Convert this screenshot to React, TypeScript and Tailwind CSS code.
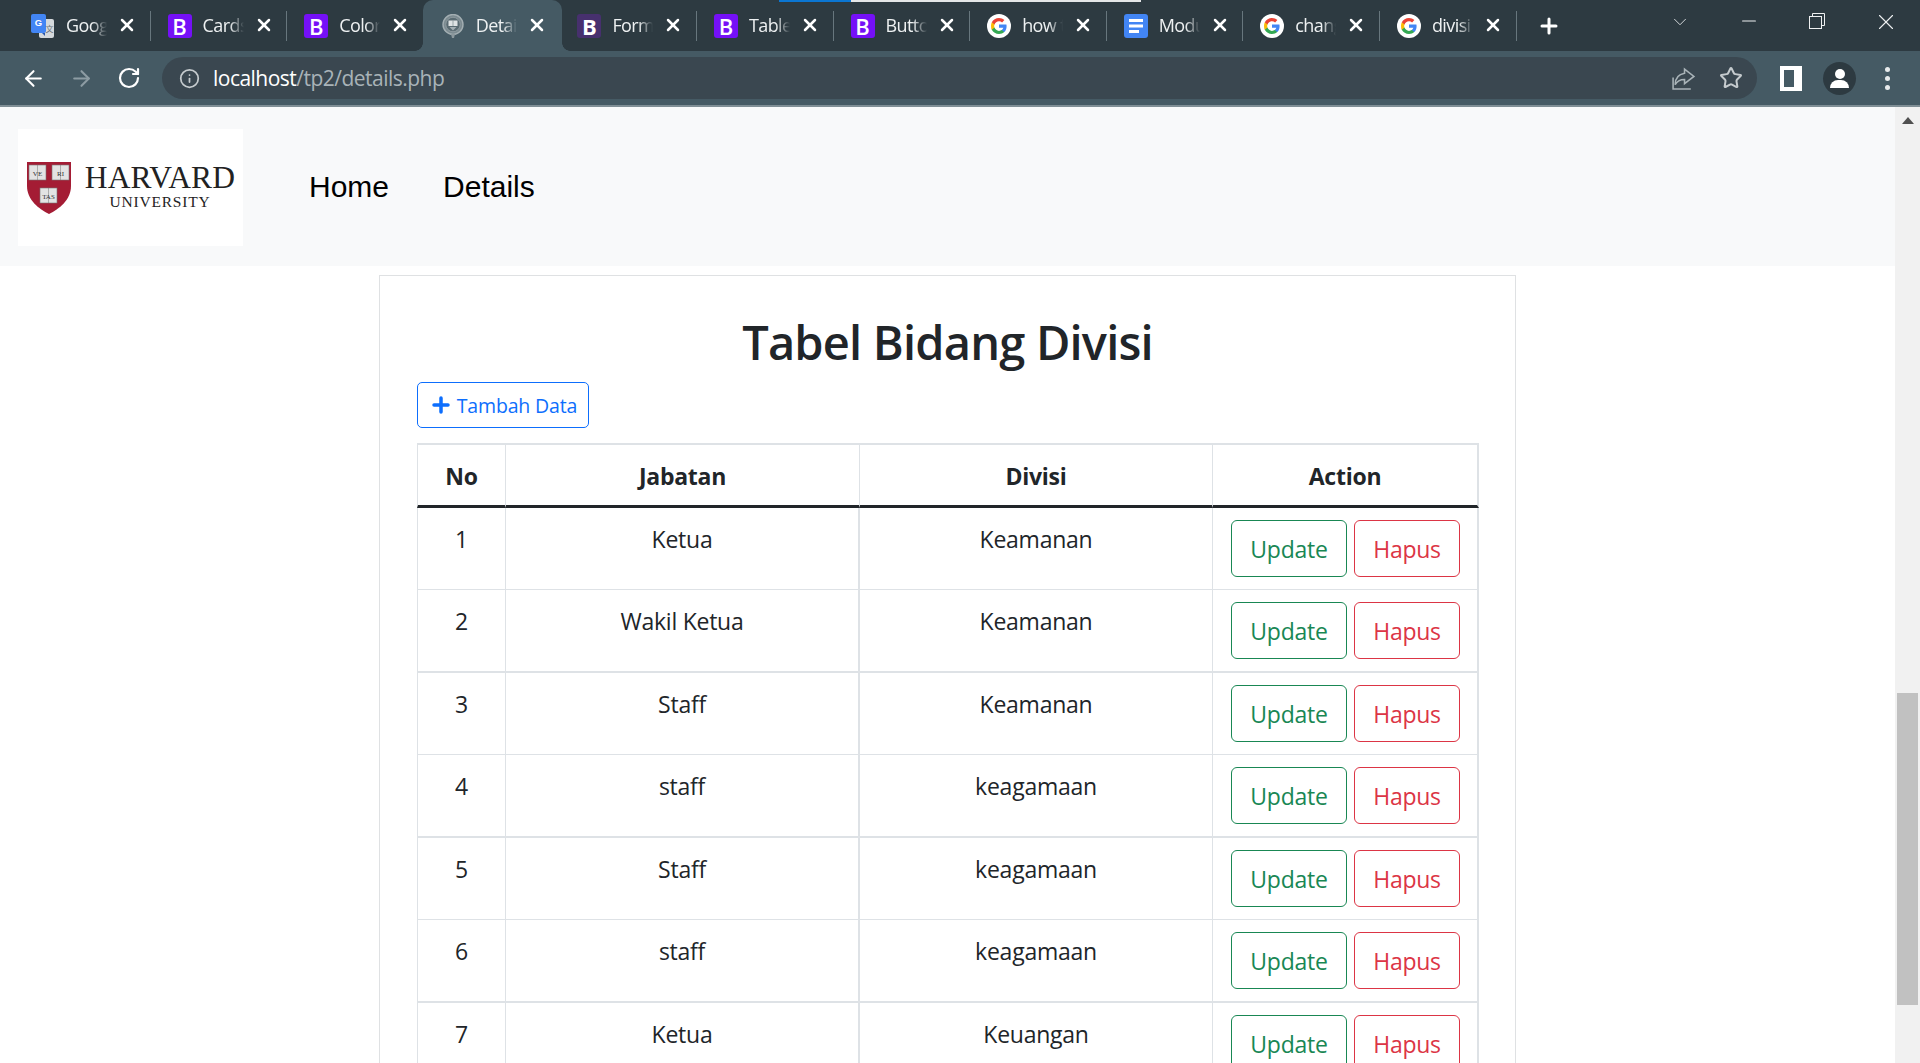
import React from "react";
import { ArrowLeft, ArrowRight, RotateCw, Info, Star, X, Plus, ChevronDown, Minus } from "lucide-react";

const GoogleG = () => (
  <svg viewBox="0 0 24 24" className="w-[24px] h-[24px]">
    <circle cx="12" cy="12" r="12" fill="#fff" />
    <path d="M19.6 12.2c0-.6-.1-1.1-.2-1.6H12v3.1h4.3c-.2 1-.7 1.8-1.6 2.4v2h2.6c1.5-1.4 2.3-3.4 2.3-5.9z" fill="#4285F4" />
    <path d="M12 20c2.2 0 4-.7 5.3-1.9l-2.6-2c-.7.5-1.6.8-2.7.8-2.1 0-3.9-1.4-4.5-3.3H4.8v2.1C6.1 18.2 8.8 20 12 20z" fill="#34A853" />
    <path d="M7.5 13.6c-.2-.5-.3-1-.3-1.6s.1-1.1.3-1.6V8.3H4.8C4.3 9.4 4 10.7 4 12s.3 2.6.8 3.7l2.7-2.1z" fill="#FBBC05" />
    <path d="M12 7.2c1.2 0 2.2.4 3.1 1.2l2.3-2.3C16 4.8 14.2 4 12 4 8.8 4 6.1 5.8 4.8 8.3l2.7 2.1c.6-1.9 2.4-3.2 4.5-3.2z" fill="#EA4335" />
  </svg>
);

const BootIcon = ({ dark }: { dark?: boolean }) => (
  <div className={`w-[24px] h-[24px] rounded-[3px] flex items-center justify-center ${dark ? "bg-[#47306e]" : "bg-[#7510f7]"}`}>
    <span className={`text-white text-[22px] leading-none font-['Open_Sans',sans-serif] ${dark ? "font-bold" : "font-semibold"}`}>B</span>
  </div>
);

const DocsIcon = () => (
  <svg viewBox="0 0 24 24" className="w-[24px] h-[24px]">
    <rect width="24" height="24" rx="3" fill="#4285F4" />
    <rect x="5" y="5" width="14" height="3" fill="#fff" />
    <rect x="5" y="10.5" width="14" height="3" fill="#fff" />
    <rect x="5" y="16" width="10" height="3" fill="#fff" />
  </svg>
);

const TranslateIcon = () => (
  <svg viewBox="0 0 24 24" className="w-[24px] h-[24px]">
    <rect x="8" y="5" width="15" height="19" rx="2" fill="#d5d9dc" />
    <rect x="0" y="0" width="15" height="19" rx="2" fill="#4285F4" />
    <path d="M14 19l-3 0 3 3z" fill="#2a56a8" />
    <text x="7.5" y="12" textAnchor="middle" fontSize="9.5" fontWeight="700" fill="#fff" fontFamily="Liberation Sans, sans-serif">G</text>
    <text x="18.5" y="18" textAnchor="middle" fontSize="8" fill="#6b7278" fontFamily="Noto Sans CJK SC, sans-serif">文</text>
  </svg>
);

const CrestIcon = () => (
  <svg viewBox="0 0 24 24" className="w-[24px] h-[24px]">
    <circle cx="12" cy="10.5" r="10" fill="#7b8a90" stroke="#a3aeb2" strokeWidth="1.4" />
    <circle cx="12" cy="10.5" r="7.2" fill="#5a6b72" stroke="#94a0a5" strokeWidth="0.8" />
    <rect x="7.5" y="6.5" width="9" height="5.5" fill="#dfe3e4" />
    <line x1="12" y1="6.5" x2="12" y2="12" stroke="#7b8a90" strokeWidth="0.7" />
    <path d="M8.5 13h7l-3.5 3.5z" fill="#a3aeb2" />
    <path d="M10 20h4l-1 4h-2z" fill="#8c989d" />
  </svg>
);

const tabs = [
  { title: "Google Translate", icon: <TranslateIcon /> },
  { title: "Cards", icon: <BootIcon /> },
  { title: "Colors", icon: <BootIcon /> },
  { title: "Details", icon: <CrestIcon />, active: true },
  { title: "Forms", icon: <BootIcon dark /> },
  { title: "Tables", icon: <BootIcon /> },
  { title: "Buttons", icon: <BootIcon /> },
  { title: "how to", icon: <GoogleG /> },
  { title: "Modul", icon: <DocsIcon /> },
  { title: "change", icon: <GoogleG /> },
  { title: "divisi", icon: <GoogleG /> },
];

const Tab = ({ t, i }: { t: (typeof tabs)[number]; i: number }) => {
  const nextActive = tabs[i + 1]?.active;
  return (
    <div className="relative w-[136.6px] h-full shrink-0 flex items-center pl-[17px]">
      {t.active && (
        <>
          <div className="absolute left-[-1px] right-[-1.4px] top-0 bottom-0 bg-[#455a64] rounded-t-[10px]" />
          <div className="absolute left-[-9px] bottom-0 w-[8px] h-[8px] bg-[radial-gradient(circle_at_0_0,transparent_7.5px,#455a64_8px)]" />
          <div className="absolute right-[-9.4px] bottom-0 w-[8px] h-[8px] bg-[radial-gradient(circle_at_100%_0,transparent_7.5px,#455a64_8px)]" />
        </>
      )}
      <div className="relative w-[24px] h-[24px] shrink-0">{t.icon}</div>
      <span className="relative -mt-[1px] ml-[11px] w-[41px] overflow-hidden whitespace-nowrap text-[18px] leading-[24px] text-[#eef1f2] tracking-[-0.6px] font-['Open_Sans',sans-serif] [mask-image:linear-gradient(to_right,#000_65%,transparent_100%)]">
        {t.title}
      </span>
      <X className="absolute left-[103px] top-[15px] w-[20px] h-[20px] text-white" strokeWidth={3} />
      {!t.active && !nextActive && <div className="absolute right-0 top-[11px] h-[30px] w-[1px] bg-[#67767d]" />}
    </div>
  );
};

const Shield = () => (
  <svg viewBox="0 0 44 52" className="w-[44px] h-[52px]">
    <path d="M0 0h44v24c0 14-12 23-22 28C12 47 0 38 0 24z" fill="#a41c34" />
    {[
      [2, 3, "VE"],
      [25, 3, "RI"],
      [13, 26, "TAS"],
    ].map(([x, y, s]) => (
      <g key={String(s)}>
        <rect x={Number(x)} y={Number(y)} width="17" height="15" fill="#e3e3e3" stroke="#777" strokeWidth="0.6" />
        <line x1={Number(x) + 8.5} y1={Number(y)} x2={Number(x) + 8.5} y2={Number(y) + 15} stroke="#777" strokeWidth="0.5" />
        <text x={Number(x) + 8.5} y={Number(y) + 10.5} textAnchor="middle" fontSize="7" fill="#333" fontFamily="Liberation Serif, serif">{s}</text>
      </g>
    ))}
  </svg>
);

const rows: { no: string; jab: string; div: string; h: string; b: string }[] = [
  { no: "1", jab: "Ketua", div: "Keamanan", h: "h-[82px]", b: "border-b" },
  { no: "2", jab: "Wakil Ketua", div: "Keamanan", h: "h-[83px]", b: "border-b-2" },
  { no: "3", jab: "Staff", div: "Keamanan", h: "h-[82px]", b: "border-b" },
  { no: "4", jab: "staff", div: "keagamaan", h: "h-[83px]", b: "border-b-2" },
  { no: "5", jab: "Staff", div: "keagamaan", h: "h-[82px]", b: "border-b" },
  { no: "6", jab: "staff", div: "keagamaan", h: "h-[83px]", b: "border-b-2" },
  { no: "7", jab: "Ketua", div: "Keuangan", h: "h-[82px]", b: "border-b" },
];

const Td = ({ children, cls }: { children: React.ReactNode; cls: string }) => (
  <td className={`align-top pt-[13px] text-center border-[#dee2e6] ${cls}`}>{children}</td>
);

export default function App() {
  return (
    <div className="w-[1920px] h-[1063px] overflow-hidden flex flex-col bg-white">
      {/* tab strip */}
      <div className="h-[51px] shrink-0 bg-[#2d3a41] flex items-stretch relative">
        <div className="absolute left-[779px] top-0 h-[2px] w-[72px] bg-[#0b76d2]" />
        <div className="absolute left-[851px] top-0 h-[2px] w-[290px] bg-[#e4e6e7]" />
        <div className="w-[14px] shrink-0" />
        {tabs.map((t, i) => (
          <Tab key={i} t={t} i={i} />
        ))}
        <div className="w-[64px] flex items-center justify-center shrink-0">
          <Plus className="w-[24px] h-[24px] text-white" strokeWidth={3} />
        </div>
        <div className="ml-auto flex h-full">
          <div className="w-[68.5px] flex justify-center pt-[11px]"><ChevronDown className="w-[24px] h-[22px] text-[#dfe3e5]" strokeWidth={1} /></div>
          <div className="w-[68.5px] flex justify-center pt-[10px]"><Minus className="w-[22px] h-[22px] text-[#eef0f1]" strokeWidth={1.2} /></div>
          <div className="w-[68.5px] flex justify-center pt-[13px]">
            <svg viewBox="0 0 16 16" className="w-[16px] h-[16px]" fill="none" stroke="#eef0f1" strokeWidth="1">
              <rect x="0.5" y="3.5" width="12" height="12" />
              <path d="M3.5 3.5v-3h12v12h-3" />
            </svg>
          </div>
          <div className="w-[68.5px] flex justify-center pt-[9px]"><X className="w-[26px] h-[26px] text-[#eef0f1]" strokeWidth={1} /></div>
        </div>
      </div>

      {/* toolbar */}
      <div className="h-[56px] shrink-0 bg-[#455a64] border-b-2 border-[#7f8e95] flex items-center pb-[2px] pt-[2px]">
        <div className="w-[9px]" />
        <div className="w-[48px] flex justify-center"><ArrowLeft className="w-[25px] h-[25px] text-white" strokeWidth={2} /></div>
        <div className="w-[48px] flex justify-center"><ArrowRight className="w-[25px] h-[25px] text-[#8d9ca3]" strokeWidth={2} /></div>
        <div className="w-[48px] flex justify-center"><RotateCw className="w-[24px] h-[24px] text-white" strokeWidth={2.2} /></div>
        <div className="ml-[9px] w-[1595px] h-[42px] bg-[#3a4750] rounded-full flex items-center">
          <Info className="ml-[17px] w-[21px] h-[21px] text-[#c5cbce]" strokeWidth={2} />
          <span className="ml-[13px] text-[21px] leading-[30px] tracking-[-0.52px] font-['Open_Sans',sans-serif] text-white">
            localhost<span className="text-[#a9b3b8]">/tp2/details.php</span>
          </span>
          <div className="ml-auto flex items-center">
            <svg viewBox="0 0 24 24" className="w-[25px] h-[25px]" fill="none" stroke="#a9b3b8" strokeWidth="1.5">
              <path d="M2 11v11h17" />
              <path d="M13 3l9 7-9 7v-4c-4 0-7 1-9 5 0-6 3-10 9-11z" />
            </svg>
            <Star className="ml-[23px] mr-[14px] w-[24px] h-[24px] text-[#c5cbce]" strokeWidth={2} />
          </div>
        </div>
        <div className="ml-[23px] w-[22px] h-[25px] bg-white flex justify-start p-[4px]">
          <div className="w-[10px] h-full bg-[#455a64]" />
        </div>
        <div className="ml-[21px] w-[33px] h-[33px] rounded-full bg-[#2d3a41] relative overflow-hidden">
          <div className="absolute left-[11.5px] top-[7px] w-[10px] h-[10px] rounded-full bg-white" />
          <div className="absolute left-[7px] top-[18px] w-[19px] h-[8px] rounded-t-[8px] bg-white" />
        </div>
        <div className="ml-[29px] flex flex-col gap-[4px]">
          <div className="w-[5px] h-[5px] rounded-full bg-[#e8ebec]" />
          <div className="w-[5px] h-[5px] rounded-full bg-[#e8ebec]" />
          <div className="w-[5px] h-[5px] rounded-full bg-[#e8ebec]" />
        </div>
      </div>

      {/* viewport */}
      <div className="flex-1 min-h-0 flex">
        <div className="w-[1895px] shrink-0 overflow-hidden text-[#212529] font-['Open_Sans',sans-serif]">
          {/* navbar */}
          <nav className="h-[159px] bg-[#f8f9fa] flex pl-[18px] pt-[22px]">
            <div className="w-[225px] h-[117px] bg-white flex items-center pl-[9px]">
              <Shield />
              <div className="ml-[14px] w-[150px] -mt-[2px] flex flex-col items-center text-[#222] font-['Liberation_Serif',serif]">
                <span className="text-[31.5px] leading-[30px] tracking-[0.2px] whitespace-nowrap">HARVARD</span>
                <span className="text-[15.5px] leading-[17px] tracking-[0.8px]">UNIVERSITY</span>
              </div>
            </div>
            <a className="ml-[66px] mt-[40px] h-[36px] text-[30px] leading-[36px] text-black font-['Liberation_Sans',sans-serif]">Home</a>
            <a className="ml-[54px] mt-[40px] h-[36px] text-[30px] leading-[36px] text-black font-['Liberation_Sans',sans-serif]">Details</a>
          </nav>

          {/* card */}
          <div className="ml-[379px] mt-[9px] w-[1137px] border border-[#dfe1e3] pt-[37px] px-[37px]">
            <h2 className="text-center text-[47px] leading-[58px] font-semibold tracking-[-0.8px] text-[#212529]">Tabel Bidang Divisi</h2>
            <button className="mt-[11px] w-[172px] h-[46px] border border-[#0d6efd] rounded-[5px] text-[#0d6efd] text-[19.5px] leading-[30px] tracking-[-0.15px] flex items-center justify-center gap-[4px]">
              <Plus className="w-[24px] h-[24px]" strokeWidth={3.5} />
              <span className="pt-[1px]">Tambah Data</span>
            </button>
            <table className="mt-[15px] w-[1062px] table-fixed border-separate border-spacing-0 text-[23px] leading-[36px] tracking-[-0.25px]">
              <colgroup>
                <col className="w-[89px]" />
                <col className="w-[354px]" />
                <col className="w-[353px]" />
                <col className="w-[266px]" />
              </colgroup>
              <thead>
                <tr className="h-[65px]">
                  <th className="pt-[2px] border-t-2 border-l border-r border-[#dee2e6] border-b-[3px] border-b-[#212529] font-bold">No</th>
                  <th className="pt-[2px] border-t-2 border-r border-[#dee2e6] border-b-[3px] border-b-[#212529] font-bold">Jabatan</th>
                  <th className="pt-[2px] border-t-2 border-r border-[#dee2e6] border-b-[3px] border-b-[#212529] font-bold">Divisi</th>
                  <th className="pt-[2px] border-t-2 border-r-2 border-[#dee2e6] border-b-[3px] border-b-[#212529] font-bold">Action</th>
                </tr>
              </thead>
              <tbody>
                {rows.map((r) => (
                  <tr key={r.no} className={r.h}>
                    <Td cls={`border-l border-r ${r.b}`}>{r.no}</Td>
                    <Td cls={`border-r-2 ${r.b}`}>{r.jab}</Td>
                    <Td cls={`border-r ${r.b}`}>{r.div}</Td>
                    <td className={`align-top pt-[12px] pl-[18px] border-r-2 border-[#dee2e6] ${r.b}`}>
                      <div className="flex gap-[7px]">
                        <button className="w-[116px] h-[57px] border border-[#198754] rounded-[6px] text-[#198754] text-[23px] leading-[36px] pt-[1px]">Update</button>
                        <button className="w-[106px] h-[57px] border border-[#dc3545] rounded-[6px] text-[#dc3545] text-[23px] leading-[36px] pt-[1px]">Hapus</button>
                      </div>
                    </td>
                  </tr>
                ))}
              </tbody>
            </table>
          </div>
        </div>

        {/* scrollbar */}
        <div className="w-[25px] shrink-0 bg-[#f1f1f1] flex flex-col items-center">
          <div className="mt-[10px] w-0 h-0 border-l-[6px] border-r-[6px] border-b-[7px] border-l-transparent border-r-transparent border-b-[#505050]" />
          <div className="mt-[569px] ml-[-1px] w-[21px] h-[312px] bg-[#c1c1c1]" />
        </div>
      </div>
    </div>
  );
}
